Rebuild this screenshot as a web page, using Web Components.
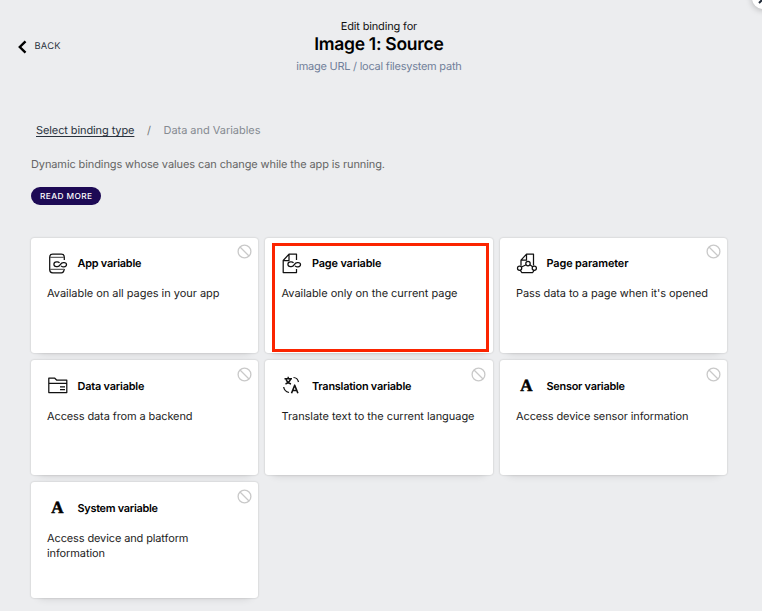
<!DOCTYPE html>
<html lang="en"><head><meta charset="utf-8"><title>Edit binding</title>
<style>
html,body{margin:0;height:611px;overflow:hidden;background:#ecedef}
body{font-family:Inter,"Open Sans",sans-serif;color:#111;text-rendering:geometricPrecision}
</style></head><body>
<binding-page></binding-page>
<script>
// A single line of text tracked to a given measure.
class FitText extends HTMLElement{
  connectedCallback(){
    this.attachShadow({mode:'open'}).innerHTML='<style>:host{display:block;white-space:nowrap}span{display:inline-block}:host(.on) span{text-decoration:underline;text-underline-offset:2px}</style><span><slot></slot></span>';
    const s=this.shadowRoot.querySelector('span'),w=+this.getAttribute('w');
    const n=this.textContent.length;
    s.style.letterSpacing='0px';
    const d=(w-s.getBoundingClientRect().width)/(n-1);
    s.style.letterSpacing=d.toFixed(3)+'px';
    s.style.marginRight=(-d).toFixed(3)+'px';
  }
}
const link='<path d="M11.500 10C11 9.200 10.200 8.800 9.200 8.800H8.500C7 8.800 5.900 9.800 5.900 11.200S7 13.600 8.500 13.600H9.300C11 13.600 11.700 12.600 12.300 11.600S13.700 9.500 15.300 9.500H16C17.500 9.500 18.500 10.300 18.500 11.600S17.500 13.800 16 13.800H15C14.200 13.800 13.500 13.500 13 12.900"/>';
const icons={
 app:'<path d="M16.300 7V4.200q0-3-3-3H4.700q-3 0-3 3v12.600q0 3 3 3h8.600q2.500 0 3-4"/><path stroke="#666" d="M2 4.300h14M2 16.300h14"/>'+link,
 page:'<path d="M14.500 7V1.200H7L1.200 7.500v12h13.300V16M7 1.200v6.300H1.200"/>'+link,
 param:'<path d="M16.500 12.500V1.200H9.500L4 7.200v5.500M9.500 1.200v6H4M9.200 11.800 4.500 14M12.800 11.800l3.200 2.200M3.200 17.200l1.500 2.300h11l1.500-2.300"/><circle cx="11" cy="10.600" r="2.200"/><circle cx="2.600" cy="15.200" r="2.100"/><circle cx="17.300" cy="15.200" r="2.100"/>',
 data:'<path d="M.8 17.500V3.200h6l2 2h10v12.300zM.8 8.300h18M12 11.800h5M12 14.500h5"/>',
 translate:'<path stroke-width="1.400" d="M2.500 3.800H10M6.200 1.800v2M8.700 4Q7.500 7.500 3.500 9M4 4.500Q5.500 8 9 9"/><path d="M11.500 2.500q4 .2 5 4.500M1.700 12q.5 4.200 5.300 5.500"/><path stroke-width="1.600" d="m9.500 18.200 3.200-8 3.200 8M10.700 15.500h4"/>'
};
class BindingIcon extends HTMLElement{
  connectedCallback(){
    const k=this.getAttribute('kind');
    this.attachShadow({mode:'open'}).innerHTML='<style>:host{display:flex;width:20px;height:21px;justify-content:center;align-items:center}svg{display:block;overflow:visible}b{font:900 17px/21px "Liberation Serif",serif;color:#000;-webkit-text-stroke:.5px #000}</style>'+
    (icons[k]?`<svg width="20" height="21" viewBox="0 0 20 21" fill="none" stroke="#111" stroke-width="1.25" stroke-linejoin="round">${icons[k]}</svg>`:'<b>A</b>');
  }
}
class BindingCard extends HTMLElement{
  connectedCallback(){
    const g=a=>this.getAttribute(a);
    this.attachShadow({mode:'open'}).innerHTML=`<style>
    :host{display:block;position:relative;box-sizing:border-box;height:115.4px;background:#fff;border-radius:3px;padding:15.2px 16.5px;box-shadow:0 0 2px rgba(0,0,0,.23),0 8px 8px -8px rgba(0,0,0,.14)}
    header{display:flex;align-items:center;gap:10px;height:21px;padding-left:.5px}
    header fit-text{font-size:10.900px;font-weight:600;line-height:16px;color:#000}
    .d{margin-top:12.5px;font-size:11px;line-height:15px;color:#1c1c1c}
    .none{position:absolute;right:6.500px;top:6.700px}
    .mark{position:absolute;left:7px;top:5.500px;width:211px;height:103px;border:3px solid #fb2400}
    </style><header><binding-icon kind="${g('icon')}"></binding-icon><fit-text w="${g('tw')}">${g('label')}</fit-text></header>
    <div class="d"><slot></slot></div>`+(this.hasAttribute('marked')?'<div class="mark"></div>':'<svg class="none" width="15" height="15" fill="none" stroke="#c9c9c9" stroke-width="1.3"><circle cx="7.5" cy="7.5" r="6.4"/><path d="m3 3 9 9"/></svg>');
  }
}
class PageHeader extends HTMLElement{
  connectedCallback(){
    this.attachShadow({mode:'open'}).innerHTML=`<style>
    :host{display:grid;grid-template-columns:1fr auto 1fr;height:76px;box-sizing:border-box;padding:19px 4px 0 0}
    .back{display:flex;align-items:center;gap:7.5px;height:14px;margin:20.500px 0 0 18px;font-size:9.3px;color:#29323d}
    .t{display:flex;flex-direction:column;align-items:center}
    .a{font-size:11px;line-height:15px;color:#111}.b{font-size:17.5px;font-weight:600;line-height:22px;color:#000}.c{font-size:11px;line-height:15px;margin-top:3px;color:#71809a}
    </style><div class="back"><svg width="9" height="14" fill="none" stroke="#000" stroke-width="2.4"><path d="M7.5 1.3 1.8 7l5.7 5.7"/></svg><fit-text w="26">BACK</fit-text></div>
    <div class="t"><fit-text class="a" w="76.500">Edit binding for</fit-text><fit-text class="b" w="129.500">Image 1: Source</fit-text><fit-text class="c" w="165.500">image URL / local filesystem path</fit-text></div>`;
  }
}
class CloseButton extends HTMLElement{
  connectedCallback(){
    this.attachShadow({mode:'open'}).innerHTML='<style>:host{position:absolute;left:752px;top:-13px;width:22px;height:22px;border-radius:50%;background:#fff;box-shadow:0 1px 6px rgba(0,0,0,.25)}svg{display:block}</style><svg width="22" height="22" stroke="#222b38" stroke-width="2"><path d="m7 8 8 8M15 8l-8 8"/></svg>';
  }
}
class BindingPage extends HTMLElement{
  connectedCallback(){
    this.attachShadow({mode:'open'}).innerHTML=`<style>
    :host{display:block;position:relative;width:762px;height:611px;overflow:hidden}
    nav{display:flex;height:15px;line-height:15px;padding:47px 0 0 36px;font-size:11px;color:#858a91}
    nav .on{color:#29323d}
    nav i{font-style:normal;width:29px;text-align:center;color:#777}
    .intro{font-size:11px;line-height:15px;color:#656565;margin:19px 0 0 31px}
    .more{display:flex;align-items:center;justify-content:center;box-sizing:border-box;padding-top:1px;width:70px;height:18px;border-radius:9px;background:#1d0a55;color:#fff;font-size:8.3px;font-weight:500;margin:15px 0 0 31px}
    main{display:grid;grid-template-columns:repeat(3,227.5px);column-gap:7px;row-gap:7px;margin:32.5px 0 0 30.5px}
    </style><page-header></page-header>
    <nav><fit-text class="on" w="98.500">Select binding type</fit-text><i>/</i><fit-text w="97">Data and Variables</fit-text></nav>
    <fit-text class="intro" w="354">Dynamic bindings whose values can change while the app is running.</fit-text>
    <div class="more"><fit-text w="52">READ MORE</fit-text></div>
    <main>
    <binding-card icon="app" label="App variable" tw="64"><fit-text w="172.500">Available on all pages in your app</fit-text></binding-card>
    <binding-card marked icon="page" label="Page variable" tw="69.500"><fit-text w="176">Available only on the current page</fit-text></binding-card>
    <binding-card icon="param" label="Page parameter" tw="82"><fit-text w="192">Pass data to a page when it's opened</fit-text></binding-card>
    <binding-card icon="data" label="Data variable" tw="67"><fit-text w="145.500">Access data from a backend</fit-text></binding-card>
    <binding-card icon="translate" label="Translation variable" tw="99.500"><fit-text w="193">Translate text to the current language</fit-text></binding-card>
    <binding-card icon="letter" label="Sensor variable" tw="78.500"><fit-text w="172.500">Access device sensor information</fit-text></binding-card>
    <binding-card icon="letter" label="System variable" tw="80.500"><fit-text w="141.500">Access device and platform</fit-text><fit-text w="58">information</fit-text></binding-card>
    </main><close-button></close-button>`;
  }
}
customElements.define('fit-text',FitText);
customElements.define('binding-icon',BindingIcon);
customElements.define('binding-card',BindingCard);
customElements.define('page-header',PageHeader);
customElements.define('close-button',CloseButton);
customElements.define('binding-page',BindingPage);
</script></body></html>
